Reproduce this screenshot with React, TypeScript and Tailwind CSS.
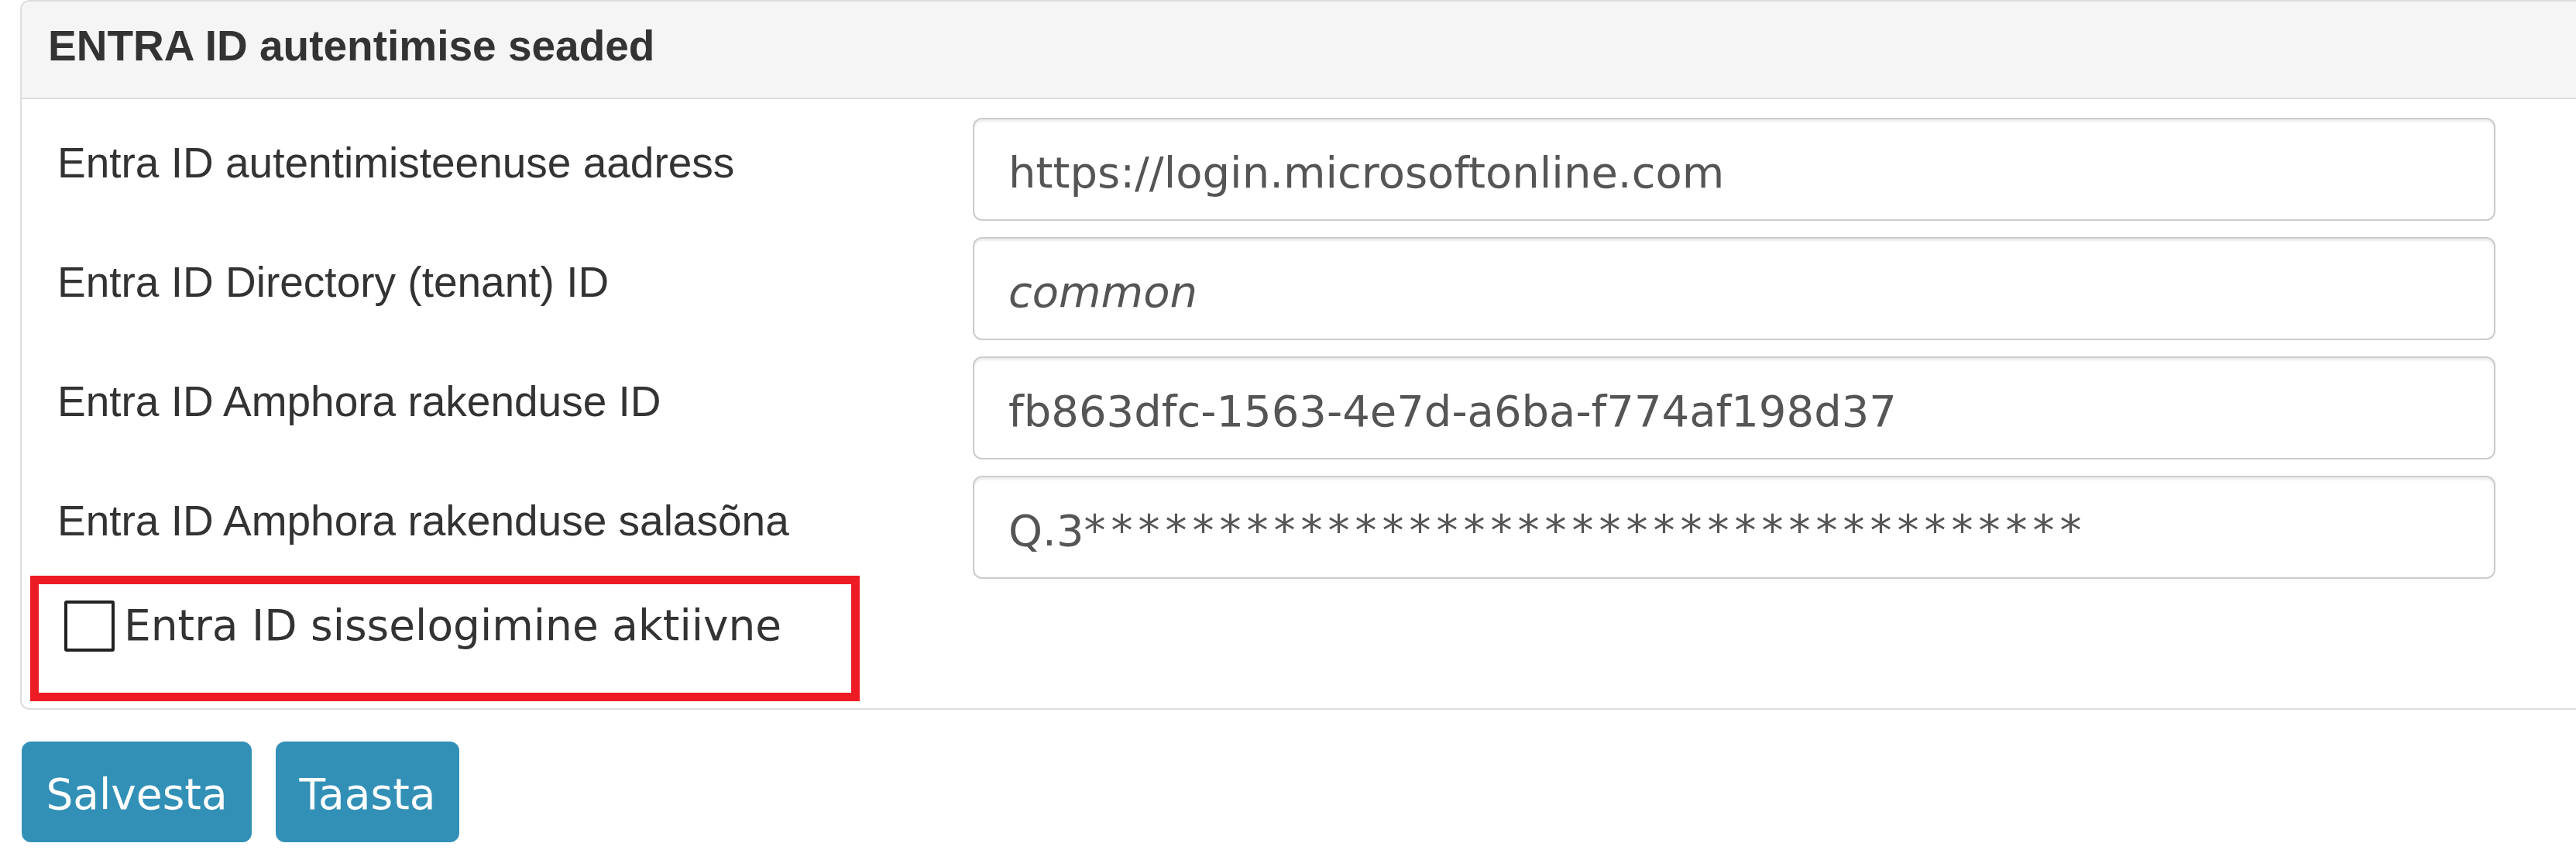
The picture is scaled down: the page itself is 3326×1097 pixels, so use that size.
import React from "react";

const rows: { label: string; value: string; italic?: boolean; password?: boolean }[] = [
  { label: "Entra ID autentimisteenuse aadress", value: "https://login.microsoftonline.com" },
  { label: "Entra ID Directory (tenant) ID", value: "common", italic: true },
  { label: "Entra ID Amphora rakenduse ID", value: "fb863dfc-1563-4e7d-a6ba-f774af198d37" },
  { label: "Entra ID Amphora rakenduse salasõna", value: "Q.3", password: true },
];

export default function App() {
  return (
    <div className="relative w-full h-[1097px] overflow-hidden bg-white">
      <div className="ml-[26px] border-2 border-r-0 border-[#dddddd] rounded-l-[12px] overflow-hidden">
        <div className="bg-[#f5f5f5] border-b-2 border-[#dddddd] pl-[34px] pt-[25px] pb-[35px]">
          <div className="font-['Liberation_Sans',Arial,sans-serif] font-bold text-[55px] leading-[64px] text-[#333333]">
            ENTRA ID autentimise seaded
          </div>
        </div>
        <div className="pt-[24px] pb-[73px]">
          <div className="flex flex-col gap-[21px]">
            {rows.map((r) => (
              <div key={r.label} className="flex items-start pl-[46px]">
                <div className="w-[1182px] shrink-0 pt-[26px] font-['Liberation_Sans',Arial,sans-serif] text-[55px] leading-[64px] text-[#333333]">
                  {r.label}
                </div>
                <div className="w-[1966px] h-[133px] shrink-0 border-2 border-[#cccccc] rounded-[12px] bg-white shadow-[inset_0_3px_3px_rgba(0,0,0,0.075)] pl-[44px] pt-[37px]">
                  <div
                    className={
                      "font-['DejaVu_Sans',Verdana,sans-serif] text-[56px] leading-[64px] text-[#555555] whitespace-nowrap " +
                      (r.italic ? "italic" : "")
                    }
                  >
                    {r.value}
                    {r.password ? (
                      <span className="tracking-[7px]">{"*".repeat(37)}</span>
                    ) : null}
                  </div>
                </div>
              </div>
            ))}
          </div>
          <div className="mt-[28px] pl-[55px] flex items-start gap-[12px]">
            <div className="w-[65px] h-[66px] shrink-0 border-4 border-[#222222] rounded-[3px] bg-white" />
            <div className="font-['DejaVu_Sans',Verdana,sans-serif] text-[55px] leading-[64px] text-[#333333] whitespace-nowrap">
              Entra ID sisselogimine aktiivne
            </div>
          </div>
        </div>
      </div>
      <div className="mt-[41px] ml-[28px] flex gap-[31px]">
        <button className="w-[297px] h-[130px] rounded-[12px] bg-[#3290b7] text-white font-['DejaVu_Sans',Verdana,sans-serif] text-[55px] leading-[64px] pt-[6px] flex items-center justify-center">
          Salvesta
        </button>
        <button className="w-[237px] h-[130px] rounded-[12px] bg-[#3290b7] text-white font-['DejaVu_Sans',Verdana,sans-serif] text-[55px] leading-[64px] pt-[6px] flex items-center justify-center">
          Taasta
        </button>
      </div>
      <div className="absolute left-[39px] top-[743px] w-[1071px] h-[162px] border-[11px] border-[#ed1c24] pointer-events-none" />
    </div>
  );
}
